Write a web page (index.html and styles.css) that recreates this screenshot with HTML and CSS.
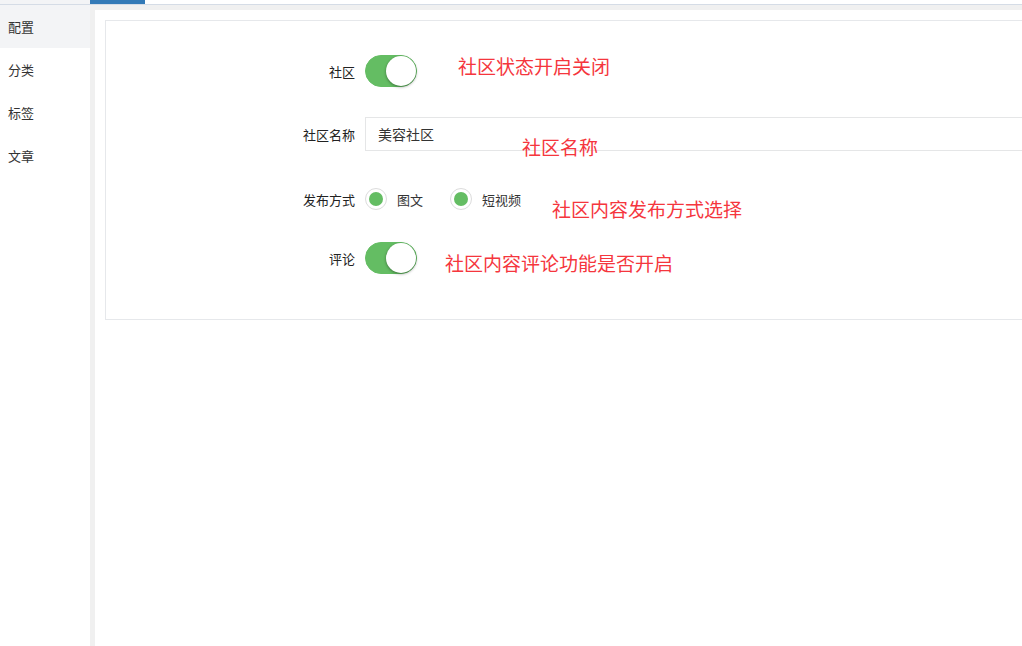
FILE: index.html
```html
<!DOCTYPE html>
<html lang="zh-CN">
<head>
  <meta charset="UTF-8">
  <title>社区配置</title>
  <link rel="stylesheet" href="styles.css">
</head>
<body>
  <div class="topbar">
    <div class="topbar-side"></div>
    <div class="topbar-tab"></div>
  </div>

  <div class="main">
    <ul class="menu">
      <li class="active">配置</li>
      <li>分类</li>
      <li>标签</li>
      <li>文章</li>
    </ul>

    <div class="content">
      <div class="card">
        <div class="row row-1">
          <label class="row-label">社区</label>
          <span class="switch"><span class="knob"></span></span>
          <span class="note note-1">社区状态开启关闭</span>
        </div>

        <div class="row row-2">
          <label class="row-label">社区名称</label>
          <input class="text-input" type="text" value="美容社区">
          <span class="note note-2">社区名称</span>
        </div>

        <div class="row row-3">
          <label class="row-label">发布方式</label>
          <span class="radio"><span class="dot"></span></span>
          <span class="radio-text">图文</span>
          <span class="radio"><span class="dot"></span></span>
          <span class="radio-text">短视频</span>
          <span class="note note-3">社区内容发布方式选择</span>
        </div>

        <div class="row row-4">
          <label class="row-label">评论</label>
          <span class="switch"><span class="knob"></span></span>
          <span class="note note-4">社区内容评论功能是否开启</span>
        </div>
      </div>
    </div>
  </div>
</body>
</html>
```

FILE: styles.css
```css
body {
  margin: 0;
  font-family: "Noto Sans CJK SC", "Liberation Sans", sans-serif;
  font-size: 13px;
  color: #333;
  background-color: #fff;
  overflow: hidden;
}

.topbar {
  display: flex;
  height: 4px;
  border-bottom: 1px solid #d5dce6;
}

.topbar-side {
  width: 90px;
  background-color: #f3f4f6;
}

.topbar-tab {
  width: 55px;
  background-color: #337ab7;
}

.main {
  display: flex;
  height: calc(100vh - 5px);
}

.menu {
  width: 90px;
  margin: 0;
  padding: 0;
  list-style: none;
}

.menu li {
  height: 43px;
  line-height: 43px;
  padding-left: 8px;
}

.menu li.active {
  background-color: #f3f4f6;
}

.content {
  flex: 1;
  border-left: 5px solid #f0f0f0;
  border-top: 5px solid #f0f0f0;
  padding: 10px 0 0 10px;
}

.card {
  border: 1px solid #e6e8eb;
  margin-right: -20px;
  padding: 33px 0 44px 0;
}

.row {
  position: relative;
  display: flex;
  align-items: center;
  height: 34px;
}

.row-2 {
  margin-top: 29px;
}

.row-3 {
  margin-top: 31px;
}

.row-4 {
  margin-top: 25px;
}

.row-label {
  width: 259px;
  padding-right: 10px;
  text-align: right;
  font-size: 13px;
  color: #222;
  box-sizing: border-box;
}

.switch {
  position: relative;
  width: 52px;
  height: 32px;
  border-radius: 16px;
  background-color: #64bd63;
  box-sizing: border-box;
  border: 1px solid #64bd63;
}

.switch .knob {
  position: absolute;
  top: 0;
  right: 0;
  width: 30px;
  height: 30px;
  border-radius: 50%;
  background-color: #fff;
  box-shadow: 0 1px 3px rgba(0, 0, 0, 0.4);
}

.text-input {
  flex: 1;
  height: 34px;
  box-sizing: border-box;
  border: 1px solid #e5e6e7;
  padding: 0 12px;
  font-family: inherit;
  font-size: 14px;
  color: #333;
  outline: none;
}

.radio {
  display: flex;
  align-items: center;
  justify-content: center;
  width: 22px;
  height: 22px;
  border: 1px solid #dcdcdc;
  border-radius: 50%;
  box-sizing: border-box;
}

.radio .dot {
  width: 14px;
  height: 14px;
  border-radius: 50%;
  background-color: #64bd63;
}

.radio-text {
  margin-left: 10px;
  margin-right: 27px;
}

.note {
  position: absolute;
  color: #f5363d;
  font-size: 19px;
  white-space: nowrap;
}

.note-1 {
  left: 352px;
  top: -2px;
}

.note-2 {
  left: 416px;
  top: 16px;
}

.note-3 {
  left: 446px;
  top: 13px;
}

.note-4 {
  left: 339px;
  top: 8px;
}
```
